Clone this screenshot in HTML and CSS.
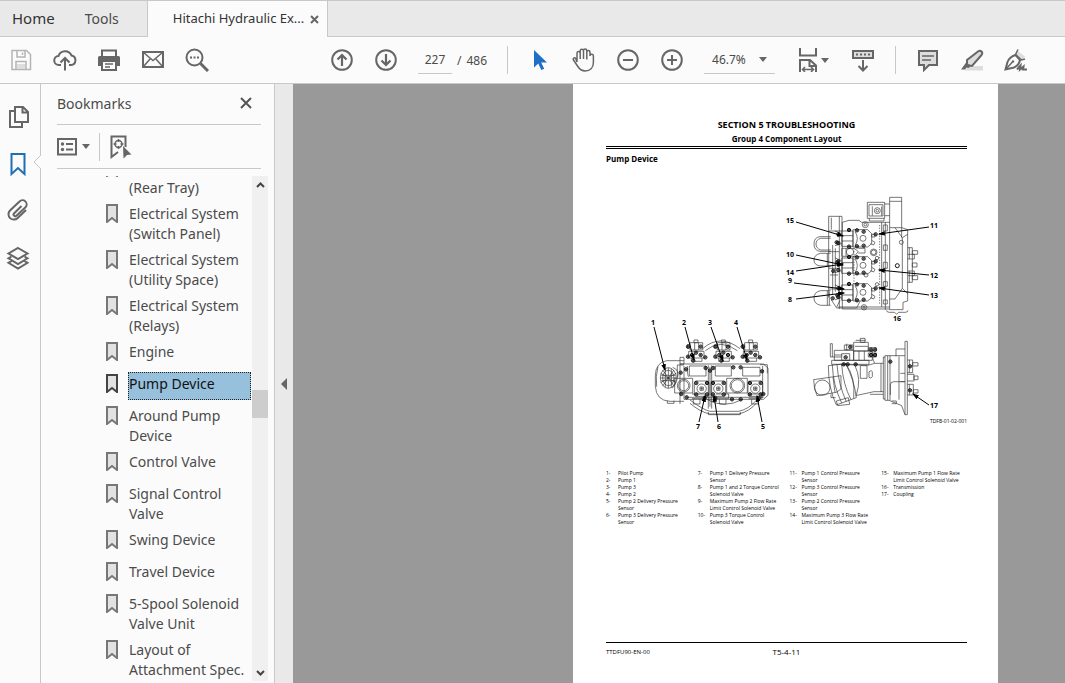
FILE: index.html
```html
<!DOCTYPE html>
<html lang="en">
<head>
    <meta charset="UTF-8">
    <meta name="viewport" content="width=device-width, initial-scale=1.0">
    <title>Hitachi Hydraulic Excavator</title>
    <link rel="stylesheet" href="styles.css">
</head>
<body>
    <!-- tabs -->
    <nav class="tabs">
        <button class="tab home">Home</button>
        <button class="tab tools">Tools</button>
        <div class="doc-tab">
            <button class="tab">Hitachi Hydraulic Ex...</button>
            <button class="tab-close" aria-label="Close tab">
                <svg width="9" height="9" viewBox="0 0 9 9"><path d="M1 1l7 7M8 1L1 8" fill="none" stroke="#666" stroke-width="2"/></svg>
            </button>
        </div>
    </nav>

    <!-- toolbar -->
    <div class="toolbar">
        <div class="group files">
            <button class="icon disabled" aria-label="Save">
                <svg viewBox="0 0 24 24"><path d="M3 2.500h14.500l4 4V21.500H3zM8 2.500V9h8V2.500M13.500 4.500V7M7 21v-7.500h10V21"/><path class="shade" d="M8 16h8v5H8z"/></svg>
            </button>
            <button class="icon" aria-label="Upload">
                <svg viewBox="0 0 24 24"><path d="M8 17H6a4.500 4.500 0 0 1-.5-9 7 7 0 0 1 13-.5A4.800 4.800 0 0 1 18 17h-2M12 22.500V10.500M7.500 14.500l4.500-4.500 4.500 4.500"/></svg>
            </button>
            <button class="icon" aria-label="Print">
                <svg viewBox="0 0 24 24"><path class="fill" d="M1 9.500a1.500 1.500 0 0 1 1.500-1.500h19a1.500 1.500 0 0 1 1.500 1.500V18h-4v-3H5v3H1z"/><path d="M5 8V2.500h14V8"/><path d="M5 13h14v9H5z" fill="#fbfbfb"/><path class="thin" d="M8 16h8M8 19h5"/></svg>
            </button>
            <button class="icon" aria-label="Email">
                <svg viewBox="0 0 24 24"><path d="M2 4h20v15H2z"/><path class="thin" d="M2.500 4.500l9.500 8 9.500-8M2.500 18.500l7-8M21.500 18.500l-7-8"/></svg>
            </button>
            <button class="icon" aria-label="Search">
                <svg viewBox="0 0 24 24"><circle cx="9.500" cy="9.500" r="8"/><path d="M15.500 15.500l7.500 7.500" stroke-width="3"/><path d="M5 9.500h2M8.500 9.500h2M12 9.500h2"/></svg>
            </button>
        </div>

        <div class="group pages">
            <button class="icon" aria-label="Previous page">
                <svg viewBox="0 0 24 24"><circle cx="12" cy="12" r="9.800"/><path d="M12 18V7M7.500 11.500L12 7l4.500 4.500" stroke-width="2.200"/></svg>
            </button>
            <button class="icon" aria-label="Next page">
                <svg viewBox="0 0 24 24"><circle cx="12" cy="12" r="9.800"/><path d="M12 6v11M7.500 12.500L12 17l4.500-4.500" stroke-width="2.200"/></svg>
            </button>
            <div class="page-box">
                <input class="page-input" type="text" value="227" aria-label="Page number">
                <span>/</span>
                <span>486</span>
            </div>
        </div>

        <div class="divider"></div>

        <div class="group view">
            <button class="icon" aria-label="Select">
                <svg viewBox="0 0 24 24"><path class="blue" d="M6 2v17.500l4.300-4 3 6.500 2.900-1.300-3-6.200H19z"/></svg>
            </button>
            <button class="icon" aria-label="Hand">
                <svg viewBox="0 0 24 24"><path class="thin" d="M6 14V5.200a1.500 1.500 0 0 1 3.200 0V11 2.800a1.600 1.600 0 0 1 3.300 0V11 2.600a1.600 1.600 0 0 1 3.300 0V11.500 4.200a1.500 1.500 0 0 1 3.200 0V8a1.700 1.700 0 0 1 3.400 0v6.500c0 5.500-3.400 8.500-8.200 8.500-4 0-5.500-1.500-7.700-5l-4-6c-1-1.800 1-2.900 2.200-1.600z" transform="translate(-1 0)"/></svg>
            </button>
            <button class="icon" aria-label="Zoom out">
                <svg viewBox="0 0 24 24"><circle cx="12" cy="12" r="9.800"/><path d="M7 12h10"/></svg>
            </button>
            <button class="icon" aria-label="Zoom in">
                <svg viewBox="0 0 24 24"><circle cx="12" cy="12" r="9.800"/><path d="M7 12h10M12 7v10"/></svg>
            </button>
        </div>

        <div class="zoom-box">
            <select class="zoom-select" aria-label="Zoom level"><option>46.7%</option></select>
            <svg class="caret" viewBox="0 0 8 5"><path d="M0 0h8L4 5z"/></svg>
        </div>

        <div class="group fit">
            <button class="icon wide" aria-label="Fit width">
                <svg viewBox="0 0 24 24"><path d="M3 0v7.500h16V0M3 24V12h10l6 5.500V24M12.500 12v6H19"/><path class="thin" d="M5.500 21.500h11M8 19l-2.500 2.500L8 24M14 19l2.500 2.500L14 24"/></svg>
                <svg class="caret" viewBox="0 0 8 5"><path d="M0 0h8L4 5z"/></svg>
            </button>
            <button class="icon" aria-label="Reading toolbar">
                <svg viewBox="0 0 24 24"><path d="M2 3h20v7H2z" fill="#ddd"/><path d="M5 6.500h2M9 6.500h2M13 6.500h2M17 6.500h2M12 12v10M7.500 18l4.500 4.500 4.500-4.500"/></svg>
            </button>
        </div>

        <div class="divider"></div>

        <div class="group comment">
            <button class="icon" aria-label="Comment">
                <svg viewBox="0 0 24 24"><path d="M3 3h18v14h-8l-5 5v-5H3z" fill="#ddd"/><path class="thin" d="M6 8h12M6 12h9"/></svg>
            </button>
            <button class="icon" aria-label="Highlight">
                <svg viewBox="0 0 24 24"><path class="shade" d="M9 18h14v4.500H4z"/><path d="M18 3.500q2-1.500 3.500 0t0 3.500L12 18l-5-1v-5z" fill="#ddd"/><path class="fill" d="M6.500 14l4 4.500-2 1.500-2-.5-1.500 2H1z"/></svg>
            </button>
            <button class="icon" aria-label="Sign">
                <svg viewBox="0 0 24 24"><path class="shade" d="M13 2.500l8 6-3 4-7-6z"/><path d="M11.500 7q-6 2-8 7L1.500 21.500 10 19.500q5-2 6-7.500z"/><path class="thin" d="M2 21l6.500-7M14 1.500l-2.500 5 6 5.500 3.500-1"/><circle class="fill" cx="9" cy="13.500" r="1.200"/><path d="M13 21.500l3.500-4-.5 4 3.500-3-.5 3h4"/></svg>
            </button>
        </div>
    </div>

    <div class="main">
        <!-- left rail -->
        <div class="rail">
            <button class="icon" aria-label="Page thumbnails">
                <svg viewBox="0 0 24 24"><path d="M9 2h8l5 5v10H9zM16.500 2v5.500H22M8.500 6H4v16h12v-4.500"/></svg>
            </button>
            <button class="icon active" aria-label="Bookmarks">
                <svg viewBox="0 0 24 24"><path d="M5.500 2h13v20L12 16l-6.500 6z"/></svg>
            </button>
            <button class="icon" aria-label="Attachments">
                <svg viewBox="0 0 24 24"><path d="M15.500 7L8 14.500a1.600 1.600 0 0 0 2.500 2.200l9-8.500a4 4 0 0 0-6-5.700L4 11.500a5.300 5.300 0 0 0 7.700 7.500l8.300-8"/></svg>
            </button>
            <button class="icon" aria-label="Layers">
                <svg viewBox="0 0 24 24"><path d="M12 2l9.500 5.500L12 13 2.500 7.500z"/><path d="M5.500 10.500l-3 1.800L12 18l9.500-5.700-3-1.800M5.500 15l-3 1.800L12 22.500l9.500-5.700-3-1.800"/></svg>
            </button>
            <svg class="notch" viewBox="0 0 8 16"><path d="M8 1L1 8l7 7" fill="#fbfbfb" stroke="#c8c8c8"/></svg>
        </div>

        <!-- bookmarks panel -->
        <div class="panel">
            <div class="panel-head">
                <span>Bookmarks</span>
                <button class="panel-close" aria-label="Close panel">
                    <svg width="12" height="12" viewBox="0 0 12 12"><path d="M1 1l10 10M11 1L1 11" fill="none" stroke="#555" stroke-width="2"/></svg>
                </button>
            </div>
            <div class="panel-tools">
                <button class="icon options" aria-label="Options">
                    <svg viewBox="0 0 24 24"><path d="M3 4h18v15.500H3z"/><path d="M11 9h7M11 14.500h7"/><circle class="fill" cx="7.500" cy="9" r="1.700"/><circle class="fill" cx="7.500" cy="14.500" r="1.700"/></svg>
                    <svg class="caret" viewBox="0 0 8 5"><path d="M0 0h8L4 5z"/></svg>
                </button>
                <button class="icon find" aria-label="Find current bookmark">
                    <svg viewBox="0 0 24 24"><path d="M10 17l-6.500 5V1.500h14V12"/><circle class="thin" cx="10.500" cy="9" r="3.500"/><path class="thin" d="M10.500 4v3M10.500 11v3M5.500 9h3M12.500 9h3"/><path class="fill" d="M15 11l8.500 8.500-4.500.5-3.500 3.500z"/></svg>
                </button>
            </div>
            <div class="panel-body">
                <ul class="bookmarks">
                    <li><svg class="mark" viewBox="0 0 12 19"><path d="M1 1h10v17l-5-4-5 4z"/></svg><a href="#"><br>(Rear Tray)</a></li>
                    <li><svg class="mark" viewBox="0 0 12 19"><path d="M1 1h10v17l-5-4-5 4z"/></svg><a href="#">Electrical System<br>(Switch Panel)</a></li>
                    <li><svg class="mark" viewBox="0 0 12 19"><path d="M1 1h10v17l-5-4-5 4z"/></svg><a href="#">Electrical System<br>(Utility Space)</a></li>
                    <li><svg class="mark" viewBox="0 0 12 19"><path d="M1 1h10v17l-5-4-5 4z"/></svg><a href="#">Electrical System<br>(Relays)</a></li>
                    <li><svg class="mark" viewBox="0 0 12 19"><path d="M1 1h10v17l-5-4-5 4z"/></svg><a href="#">Engine</a></li>
                    <li class="selected"><svg class="mark" viewBox="0 0 12 19"><path d="M1 1h10v17l-5-4-5 4z"/></svg><a href="#">Pump Device</a></li>
                    <li><svg class="mark" viewBox="0 0 12 19"><path d="M1 1h10v17l-5-4-5 4z"/></svg><a href="#">Around Pump<br>Device</a></li>
                    <li><svg class="mark" viewBox="0 0 12 19"><path d="M1 1h10v17l-5-4-5 4z"/></svg><a href="#">Control Valve</a></li>
                    <li><svg class="mark" viewBox="0 0 12 19"><path d="M1 1h10v17l-5-4-5 4z"/></svg><a href="#">Signal Control<br>Valve</a></li>
                    <li><svg class="mark" viewBox="0 0 12 19"><path d="M1 1h10v17l-5-4-5 4z"/></svg><a href="#">Swing Device</a></li>
                    <li><svg class="mark" viewBox="0 0 12 19"><path d="M1 1h10v17l-5-4-5 4z"/></svg><a href="#">Travel Device</a></li>
                    <li><svg class="mark" viewBox="0 0 12 19"><path d="M1 1h10v17l-5-4-5 4z"/></svg><a href="#">5-Spool Solenoid<br>Valve Unit</a></li>
                    <li><svg class="mark" viewBox="0 0 12 19"><path d="M1 1h10v17l-5-4-5 4z"/></svg><a href="#">Layout of<br>Attachment Spec.</a></li>
                </ul>
                <div class="scrollbar">
                    <button aria-label="Scroll up"><svg width="9" height="6" viewBox="0 0 9 6"><path d="M1 5l3.500-3.500L8 5" fill="none" stroke="#444" stroke-width="2"/></svg></button>
                    <div class="before"></div>
                    <div class="thumb"></div>
                    <div class="after"></div>
                    <button aria-label="Scroll down"><svg width="9" height="6" viewBox="0 0 9 6"><path d="M1 1l3.500 3.500L8 1" fill="none" stroke="#444" stroke-width="2"/></svg></button>
                </div>
            </div>
        </div>

        <button class="splitter" aria-label="Collapse panel">
            <svg width="6" height="12" viewBox="0 0 6 12"><path d="M6 0v12L0 6z" fill="#666"/></svg>
        </button>

        <!-- document -->
        <div class="canvas">
            <article class="sheet">
                <h1>SECTION 5 TROUBLESHOOTING</h1>
                <h2>Group 4 Component Layout</h2>
                <hr class="double">
                <h3>Pump Device</h3>

                <svg class="figure" viewBox="0 0 361 240">
                    <defs>
                        <marker id="arrow" viewBox="0 0 6 6" refX="5" refY="3" markerWidth="7" markerHeight="7" markerUnits="userSpaceOnUse" orient="auto">
                            <path d="M0 1l6 2-6 2z" fill="#000" stroke="none"/>
                        </marker>
                        <g id="bolt" class="bolt"><circle r="5"/><circle r="2"/></g>
                        <!-- pump seen from above -->
                        <g id="module">
                            <path d="M-64-22h34v46h-34zM-30-26h44l12 12v30l-12 10h-44zM-64-8h34M-64 8h34M-24-20q14 20 0 42M-84-22l20 8M-84 22l20-6"/>
                            <circle r="9"/>
                            <path d="M26-12h10v8h-10zM26 6l10 6-4 8-10-4"/>
                            <use href="#bolt" x="-18" y="-24"/><use href="#bolt" x="2" y="-20"/><use href="#bolt" x="-18" y="24"/><use href="#bolt" x="2" y="22"/>
                            <use href="#bolt" x="-42" y="-25"/><use href="#bolt" x="-42" y="25"/><use href="#bolt" x="-74" y="-12"/><use href="#bolt" x="-74" y="14"/><use href="#bolt" x="38" y="-12"/>
                        </g>
                        <!-- regulator block on top of each pump -->
                        <g id="block">
                            <path d="M-20-12h38v22h-38zM-8-20h12v8h-12zM-28-6h8v10h-8zM-24 14h46v20h-46zM-6-12v22M6-12v22M-16 34v10h32V34"/>
                            <use href="#bolt" x="-26" y="0"/><use href="#bolt" x="12" y="0"/><use href="#bolt" x="-14" y="25"/><use href="#bolt" x="12" y="25"/><use href="#bolt" x="-2" y="18"/><use href="#bolt" x="-26" y="30"/><use href="#bolt" x="26" y="32"/>
                        </g>
                        <g id="port">
                            <rect x="-22" y="-23" width="44" height="46" rx="6"/><circle r="14"/><path d="M-5-5h10v10h-10zM-5 0h10M0-5v10"/>
                            <use href="#bolt" x="-16" y="-17"/><use href="#bolt" x="16" y="-17"/><use href="#bolt" x="-16" y="17"/><use href="#bolt" x="16" y="17"/>
                        </g>
                    </defs>

                    <!-- top view -->
                    <g class="drawing" transform="translate(164 -5) scale(.3333)">
                        <path d="M359 374V37h36v91l18 6v214l-14 4v22zM359 49h36M359 128h16l22 30v152l-22 32h-16M375 128h20M395 128v30M397 158l16-10M397 310l16 16"/>
                        <path d="M413 188h14v104h-14M427 197h16v11h-16zM427 234h14v12h-14zM427 272h16v12h-16zM413 208h20v14h-20M413 258h20v14h-20M418 188v34M418 258v34"/>
                        <circle class="bolt" cx="382" cy="242" r="6"/><circle cx="394" cy="172" r="6"/>
                        <path d="M292 52h52v48h-52zM297 59h42v34h-42zM344 57h15M344 92h15M307 64v28M335 64v28M298 100v8h44v-8"/>
                        <circle cx="322" cy="77" r="9"/><circle cx="322" cy="77" r="4"/>
                        <path d="M217 372V112l20-6h30l8 6h84M205 366h154M217 372h142M335 112v254M346 112v262"/>
                        <path stroke-dasharray="4 4" d="M329 120v240M252 190v108"/>
                        <path d="M340 120h12v18h-12zM340 180h12v16h-12zM340 232h12v18h-12zM340 290h12v14h-12zM340 345h12v12h-12z"/>
                        <path d="M176 94h40v44h-40zM184 98v36M208 94v278M176 138v200M188 180v150M196 190v130M176 200h32M176 250h32M176 312h32M180 270h24M200 366l10-20M184 345l16 24h60l10-20"/>
                        <path d="M182 155h-32q-18 2-18 22t18 22h32M182 160h-30q-14 4-14 17t14 18h30M182 205h-30q-20 4-20 20t20 18h30M172 205v38M182 317h-30q-20 4-20 22t20 22h30M172 317v44M178 320v40"/>
                        <path d="M215 190h38l12 10-12 14h-38zM228 190v24M265 190h20v14h-20"/>
                        <circle cx="240" cy="201" r="11"/><circle cx="311" cy="202" r="10"/><circle cx="311" cy="202" r="7"/><circle cx="288" cy="270" r="6"/><circle cx="321" cy="219" r="5"/><circle cx="321" cy="298" r="5"/><circle cx="286" cy="119" r="9"/><circle cx="282" cy="367" r="8"/>
                        <circle cx="286" cy="119" r="4"/><circle cx="282" cy="367" r="3"/>
                        <use href="#module" x="279" y="160"/><use href="#module" x="279" y="241"/><use href="#module" x="279" y="322"/>
                        <use href="#bolt" x="200" y="172"/><use href="#bolt" x="202" y="232"/><use href="#bolt" x="190" y="258"/><use href="#bolt" x="202" y="331"/><use href="#bolt" x="188" y="340"/>
                        <path d="M350 376q0 6 8 6h16l6 6 6-6h20q8 0 8-6"/>
                    </g>

                    <!-- front view -->
                    <g class="drawing" transform="translate(34 120) scale(.3333)">
                        <path d="M132 152H80q-34 6-34 46v30q2 44 44 46h42M82 272v8h20v-8M54 170q-8 30-4 60M120 142v140M132 165h-20v36"/>
                        <ellipse cx="85" cy="204" rx="24" ry="31"/><ellipse cx="85" cy="204" rx="17" ry="23"/><path d="M62 190l46 28M62 218l46-28M85 173v62M68 180l34 48M68 228l34-48M61 204h48M64 196h42M64 212h42M76 176v56M94 176v56M98 172q22 8 14 34t-16 28"/>
                        <path d="M188 116q52-46 112 0M196 122q46-38 96 0M150 280q30 26 60 32h86q34-8 54-34M150 270q40 30 60 34h86q30-6 54-34M205 306v8h96v-8M200 268q52 30 108 0"/>
                        <path d="M120 162h250l14 12v82l-14 12H132V168M142 168q0 30 4 32M368 168v96M120 142h12v20h-12M360 164h22v26M140 262h230M160 268v14h20v-14M238 268v14h20v-14M335 268v14h20v-14"/>
                        <path d="M148 168h50v30h-50zM226 168h48v30h-48zM308 172h52v26h-52zM205 166v130M215 166v130M210 170v120M156 252h40v14h-40M228 252h38v14h-38M326 252h38v14h-38"/>
                        <path d="M104 205h54v44h-54zM260 205h62v44h-62z"/><circle cx="131" cy="227" r="19"/><circle cx="131" cy="227" r="15"/><circle cx="292" cy="227" r="22"/><circle cx="292" cy="227" r="18"/>
                        <use href="#block" x="170" y="110"/><use href="#block" x="252" y="110"/><use href="#block" x="334" y="110"/>
                        <use href="#port" x="185" y="236"/><use href="#port" x="235" y="236"/><use href="#port" x="346" y="236"/>
                        <use href="#bolt" x="122" y="188"/><use href="#bolt" x="138" y="178"/><use href="#bolt" x="124" y="252"/><use href="#bolt" x="140" y="262"/><use href="#bolt" x="210" y="182"/><use href="#bolt" x="197" y="174"/><use href="#bolt" x="220" y="174"/>
                        <use href="#bolt" x="280" y="172"/><use href="#bolt" x="302" y="172"/><use href="#bolt" x="276" y="268"/><use href="#bolt" x="302" y="268"/><use href="#bolt" x="366" y="184"/><use href="#bolt" x="370" y="252"/><use href="#bolt" x="356" y="264"/><use href="#bolt" x="226" y="264"/><use href="#bolt" x="194" y="264"/><use href="#bolt" x="160" y="152"/><use href="#bolt" x="244" y="152"/><use href="#bolt" x="322" y="152"/>
                    </g>

                    <!-- side view -->
                    <g class="drawing" transform="translate(189 135) scale(.3333)">
                        <path d="M330 49h7v220h-7zM330 72h-27v22M330 92h-60v134h12l38 16 10 27M270 96h-5v126h5M278 92v134M285 92v134M312 94v130M286 210v-30q0-10 10-10h34M316 145h14M316 170h14M290 228h14v8h-14"/>
                        <path d="M337 105h16v38h-16M353 113h16v10h-16zM337 148h20v20h-20M357 153h12v11h-12zM337 178h18v32h-18M355 194h14v10h-14zM343 105v38M343 178v32"/>
                        <path d="M265 115h-26l-20 6-66-2-14 2M265 200h-28l-55 12M258 115v86M239 115q-10-20-2-22M265 208h-40M222 140q8-6 10 0v15q-4 8-10 2zM196 122h20v38h-20zM180 122q20 40 4 88"/>
                        <path d="M100 122l52-6q26 50 32 102l-60 22q-24-50-24-118zM112 120q2 60 28 114M126 118q4 60 28 112M140 118q4 60 28 106M152 116q30 40 24 104M124 228l36-10 4 20-36 4z"/>
                        <path d="M56 164l82-12v40l-14 10-58 10q-10-22-10-48zM114 156l6 46M108 208v10h14"/><circle cx="82" cy="188" r="23"/>
                        <path d="M106 56v40M112 56v40M106 56h6M106 96h34M118 76h58v30h-58zM140 86h24v20h-24zM176 52h44v26h-44zM196 40h14v12h-14zM182 46h30M148 60h26v14h-26zM155 56v20M176 78h56v28h-56zM220 68h24v10h-24zM220 84h24v12h-24zM192 78v28M208 78v28M110 106h112v12H110zM118 90h24M180 64h40"/>
                        <use href="#bolt" x="152" y="97"/><use href="#bolt" x="146" y="118"/><use href="#bolt" x="158" y="118"/><use href="#bolt" x="182" y="118"/><use href="#bolt" x="228" y="74"/><use href="#bolt" x="240" y="74"/><use href="#bolt" x="228" y="90"/><use href="#bolt" x="240" y="90"/><use href="#bolt" x="166" y="66"/><use href="#bolt" x="286" y="110"/><use href="#bolt" x="345" y="124"/><use href="#bolt" x="345" y="196"/>
                    </g>

                    <!-- leader lines -->
                    <g class="leaders">
                        <path d="M190 32l47 14"/><path d="M190 65l47 10"/><path d="M190 81l47-7"/><path d="M188 93l50 6"/><path d="M190 109l48-6"/>
                        <path d="M323 37l-50 7"/><path d="M323 85l-50-5"/><path d="M323 105l-50-7"/>
                        <path d="M48 137l11 43"/><path d="M79 137l9 33"/><path d="M105 137l12 34"/><path d="M131 137l10 33"/>
                        <path d="M93 232l6-26"/><path d="M112 232l-4-26"/><path d="M156 232l-5-26"/><path d="M323 215l-16-11"/>
                    </g>
                    <g class="numbers">
                        <text x="184" y="33">15</text><text x="184" y="67">10</text><text x="184" y="85">14</text><text x="184" y="93">9</text><text x="184" y="112">8</text>
                        <text x="328" y="38">11</text><text x="328" y="88">12</text><text x="328" y="108">13</text><text x="291" y="131">16</text>
                        <text x="47" y="135">1</text><text x="78" y="135">2</text><text x="104" y="135">3</text><text x="130" y="135">4</text>
                        <text x="92" y="239">7</text><text x="113" y="239">6</text><text x="157" y="239">5</text><text x="328" y="218">17</text>
                    </g>
                    <text class="code" x="361" y="233">TDFB-01-02-001</text>
                </svg>

                <div class="legend">
                    <dl>
                        <dt>1-</dt><dd>Pilot Pump</dd>
                        <dt>2-</dt><dd>Pump 1</dd>
                        <dt>3-</dt><dd>Pump 3</dd>
                        <dt>4-</dt><dd>Pump 2</dd>
                        <dt>5-</dt><dd>Pump 2 Delivery Pressure<br>Sensor</dd>
                        <dt>6-</dt><dd>Pump 3 Delivery Pressure<br>Sensor</dd>
                    </dl>
                    <dl>
                        <dt>7-</dt><dd>Pump 1 Delivery Pressure<br>Sensor</dd>
                        <dt>8-</dt><dd>Pump 1 and 2 Torque Control<br>Solenoid Valve</dd>
                        <dt>9-</dt><dd>Maximum Pump 2 Flow Rate<br>Limit Control Solenoid Valve</dd>
                        <dt>10-</dt><dd>Pump 3 Torque Control<br>Solenoid Valve</dd>
                    </dl>
                    <dl>
                        <dt>11-</dt><dd>Pump 1 Control Pressure<br>Sensor</dd>
                        <dt>12-</dt><dd>Pump 3 Control Pressure<br>Sensor</dd>
                        <dt>13-</dt><dd>Pump 2 Control Pressure<br>Sensor</dd>
                        <dt>14-</dt><dd>Maximum Pump 3 Flow Rate<br>Limit Control Solenoid Valve</dd>
                    </dl>
                    <dl>
                        <dt>15-</dt><dd>Maximum Pump 1 Flow Rate<br>Limit Control Solenoid Valve</dd>
                        <dt>16-</dt><dd>Transmission</dd>
                        <dt>17-</dt><dd>Coupling</dd>
                    </dl>
                </div>

                <footer class="sheet-foot">
                    <span>TTDFU90-EN-00</span>
                    <span class="page-no">T5-4-11</span>
                </footer>
            </article>
        </div>
    </div>
</body>
</html>
```
FILE: styles.css
```css
* {
    box-sizing: border-box;
}

body {
    margin: 0;
    height: 100vh;
    display: flex;
    flex-direction: column;
    overflow: hidden;
    background: #fbfbfb;
    color: #4b4b4b;
    font-family: "Noto Sans", "Open Sans", sans-serif;
    font-size: 14px;
}

button {
    margin: 0;
    padding: 0;
    border: 0;
    background: none;
    color: inherit;
    font: inherit;
}

svg {
    display: block;
    flex: none;
}

/* tabs */
.tabs {
    display: flex;
    flex: none;
    height: 37px;
    background: #e9e9e9;
    border-top: 1px solid #c8c8c8;
    box-shadow: inset 0 -1px #c8c8c8;
}

.tab {
    padding-bottom: 2px;
}

.home {
    padding-left: 12px;
    font-size: 15px;
    color: #333;
}

.tools {
    padding: 0 28px 2px 30px;
}

.doc-tab {
    display: flex;
    align-items: center;
    gap: 6px;
    width: 181px;
    padding-left: 25px;
    background: #fbfbfb;
    border: solid #c8c8c8;
    border-width: 0 1px;
    color: #333;
    font-size: 13px;
}

/* toolbar */
.toolbar {
    display: flex;
    align-items: center;
    flex: none;
    height: 47px;
    border-bottom: 1px solid #c8c8c8;
}

.group {
    display: flex;
    align-items: center;
    gap: 20px;
}

.files { padding-left: 9px; }
.pages { padding-left: 121px; }
.view { padding-left: 20px; }
.fit { padding-left: 22px; gap: 22px; }
.comment { padding-left: 20px; }

.icon {
    display: flex;
    align-items: center;
    flex: none;
}

.icon svg {
    width: 24px;
    height: 24px;
    fill: none;
    stroke: #666;
    stroke-width: 2;
}

.icon .thin { stroke-width: 1.5; }
.icon .fill { fill: #666; stroke: none; }
.icon .blue { fill: #1f6fc5; stroke: none; }
.icon .shade { fill: #ddd; stroke: none; }
.icon.disabled svg { stroke: #b4b4b4; stroke-width: 1.5; }

.caret,
.icon .caret {
    width: 8px;
    height: 5px;
    fill: #666;
    stroke: none;
}

.page-box {
    display: flex;
    align-items: center;
    gap: 5px;
    font-size: 12px;
}

.page-input {
    width: 34px;
    height: 27px;
    padding: 0;
    border: 0;
    border-bottom: 1px solid #c8c8c8;
    background: none;
    color: inherit;
    font: inherit;
    text-align: center;
}

.divider {
    width: 1px;
    height: 28px;
    margin-left: 20px;
    background: #c8c8c8;
}

.zoom-box {
    display: flex;
    align-items: center;
    width: 71px;
    height: 27px;
    margin-left: 20px;
    padding: 0 8px;
    border-bottom: 1px solid #c8c8c8;
}

.zoom-select {
    flex: 1;
    min-width: 0;
    padding: 0;
    border: 0;
    appearance: none;
    background: none;
    color: inherit;
    font: inherit;
    font-size: 12px;
}

/* main area */
.main {
    display: flex;
    flex: 1;
    min-height: 0;
}

.rail {
    position: relative;
    display: flex;
    flex-direction: column;
    align-items: center;
    gap: 23px;
    flex: none;
    width: 41px;
    padding: 21px 4px 0 0;
    border-right: 1px solid #c8c8c8;
}

.rail .active svg {
    stroke: #1f6fb5;
}

/* pointer from the rail to the open panel */
.notch {
    position: absolute;
    top: 70px;
    right: -1px;
    width: 8px;
    height: 16px;
}

.panel {
    display: flex;
    flex-direction: column;
    flex: none;
    width: 234px;
    border-right: 1px solid #c8c8c8;
}

.panel-head,
.panel-tools {
    display: flex;
    align-items: center;
    flex: none;
    margin: 0 13px 0 16px;
    border-bottom: 1px solid #c8c8c8;
}

.panel-head {
    justify-content: space-between;
    height: 41px;
    padding: 0 9px 2px 0;
}

.panel-tools {
    height: 44px;
}

.options {
    gap: 3px;
    height: 28px;
    padding-right: 9px;
    border-right: 1px solid #c8c8c8;
}

.find {
    margin-left: 8px;
}

.options svg:first-child {
    margin-left: -2px;
}

.panel-body {
    display: flex;
    flex: 1;
    min-height: 0;
    margin: 7px 6px 2px 0;
    overflow: hidden;
}

.bookmarks {
    flex: 1;
    display: flex;
    flex-direction: column;
    gap: 4px;
    margin: -20px 1px 0 65px;
    padding: 0;
    list-style: none;
    line-height: 20px;
}

.bookmarks li {
    display: flex;
    gap: 10px;
    flex: none;
}

.bookmarks a {
    flex: 1;
    min-height: 28px;
    padding: 2px 0 0 1px;
    color: inherit;
    text-decoration: none;
    white-space: nowrap;
}

.mark {
    width: 12px;
    height: 19px;
    margin-top: 2px;
    fill: #e2e2e2;
    stroke: #777;
    stroke-width: 2;
}

.selected .mark {
    stroke: #444;
}

.selected a {
    background: #97c0dc;
    color: #111;
    outline: 1px dotted #222;
    outline-offset: -1px;
}

.scrollbar {
    display: flex;
    flex-direction: column;
    width: 16px;
    background: #f0f0f0;
}

.scrollbar button {
    display: flex;
    align-items: center;
    justify-content: center;
    height: 17px;
}

.before { flex: 197; }
.thumb { flex: 28; background: #cdcdcd; }
.after { flex: 247; }

.splitter {
    display: flex;
    align-items: center;
    justify-content: center;
    flex: none;
    width: 18px;
    background: #e9e9e9;
}

/* document */
.canvas {
    flex: 1;
    min-width: 0;
    padding: 0 67px 0 280px;
    background: #999;
    overflow: hidden;
}

.sheet {
    min-height: 100%;
    padding: 34px 31px 0 33px;
    background: #fff;
    color: #000;
    font-family: "Open Sans", "Noto Sans", sans-serif;
}

.sheet h1,
.sheet h2,
.sheet h3 {
    margin: 0;
    font-size: 8px;
    line-height: 14px;
    text-align: center;
}

.sheet h1 {
    font-size: 9px;
}

.sheet h3 {
    margin-top: 3px;
    text-align: left;
}

.double {
    margin: 0;
    border: 0;
    border-top: 3px double #000;
}

.figure {
    width: 100%;
    margin-top: 24px;
}

.drawing {
    fill: none;
    stroke: #333;
    stroke-width: 2;
}

.bolt {
    stroke: #111;
    stroke-width: 3;
}

.leaders {
    fill: none;
    stroke: #000;
    stroke-width: 1;
}

.leaders path {
    marker-end: url(#arrow);
}

.numbers {
    font-size: 7px;
    font-weight: bold;
    text-anchor: middle;
}

.code {
    font-size: 5px;
    text-anchor: end;
}

.legend {
    display: grid;
    grid-template-columns: repeat(4, 1fr);
    gap: 6px;
    min-height: 57px;
    margin-top: 40px;
    font-size: 5px;
    line-height: 7px;
    white-space: nowrap;
}

.legend dl {
    display: grid;
    grid-template-columns: 12px 1fr;
    align-content: start;
    margin: 0;
}

.legend dd {
    margin: 0;
}

.sheet-foot {
    display: grid;
    grid-template-columns: 1fr auto 1fr;
    align-items: center;
    margin-top: 115px;
    padding-top: 3px;
    border-top: 1px solid #000;
    font-size: 6px;
    line-height: 12px;
}

.page-no {
    font-size: 8px;
}
```
